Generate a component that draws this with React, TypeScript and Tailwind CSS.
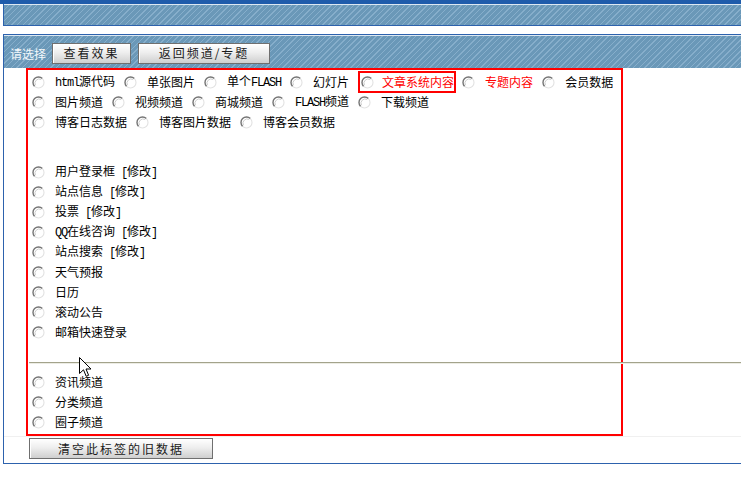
import React from 'react';

type Option = {
    label: React.ReactNode;
    red?: boolean;
    boxed?: boolean;
};

// half-width latin runs, 6px per glyph like the old bitmap font
const M: React.FC<{ children: React.ReactNode }> = ({ children }) => (
    <span className="font-['Liberation_Mono',monospace] text-[12px] tracking-[-1.2px]">{children}</span>
);

const Radio: React.FC = () => (
    <svg width="13" height="13" viewBox="0 0 13 13" className="shrink-0">
        <circle cx="6.5" cy="6.5" r="5.5" fill="#ffffff" />
        <path d="M2.6 10.4 A5.5 5.5 0 0 1 10.4 2.6" fill="none" stroke="#747474" strokeWidth="1.4" />
        <path d="M10.4 2.6 A5.5 5.5 0 0 1 2.6 10.4" fill="none" stroke="#e2e2e2" strokeWidth="1.1" />
        <path d="M3.5 9.2 A4.2 4.2 0 0 1 9.2 3.5" fill="none" stroke="#c0c0c0" strokeWidth="0.8" />
    </svg>
);

const withEdit = (name: React.ReactNode) => (
    <>
        {name}
        <M> [</M>修改<M>]</M>
    </>
);

const typeRows: Option[][] = [
    [
        { label: <><M>html</M>源代码</> },
        { label: '单张图片' },
        { label: <>单个<M>FLASH</M></> },
        { label: '幻灯片' },
        { label: '文章系统内容', red: true, boxed: true },
        { label: '专题内容', red: true },
        { label: '会员数据' },
    ],
    [
        { label: '图片频道' },
        { label: '视频频道' },
        { label: '商城频道' },
        { label: <><M>FLASH</M>频道</> },
        { label: '下载频道' },
    ],
    [
        { label: '博客日志数据' },
        { label: '博客图片数据' },
        { label: '博客会员数据' },
    ],
];

const blockRows: React.ReactNode[] = [
    withEdit('用户登录框'),
    withEdit('站点信息'),
    withEdit('投票'),
    withEdit(<><M>QQ</M>在线咨询</>),
    withEdit('站点搜索'),
    '天气预报',
    '日历',
    '滚动公告',
    '邮箱快速登录',
];

const channelRows = ['资讯频道', '分类频道', '圈子频道'];

const stripes =
    'bg-[repeating-linear-gradient(135deg,#6a98b8_0px,#6a98b8_3px,#86aecb_3px,#86aecb_4px)]';

const OptionItem: React.FC<{ opt: Option }> = ({ opt }) => {
    const text = (
        <span className={`whitespace-nowrap ${opt.red ? 'text-[#ff0000]' : 'text-black'}`}>{opt.label}</span>
    );
    if (opt.boxed) {
        return (
            <span className="shrink-0 flex items-center h-[22px] -my-[1px] border-2 border-[#ff0000] pl-[1px] mr-[6px]">
                <Radio />
                <span className="ml-[8px] flex items-center">{text}</span>
            </span>
        );
    }
    return (
        <span className="shrink-0 flex items-center mr-[9px]">
            <Radio />
            <span className="ml-[10px] flex items-center">{text}</span>
        </span>
    );
};

const LineItem: React.FC<{ children: React.ReactNode }> = ({ children }) => (
    <div className="flex items-center h-[20px]">
        <Radio />
        <span className="ml-[10px] text-black whitespace-nowrap">{children}</span>
    </div>
);

const GrayButton: React.FC<{ width: string; children: React.ReactNode }> = ({ width, children }) => (
    <button
        className={`${width} h-[21px] border border-[#6f6f6f] bg-[linear-gradient(#ffffff,#eeeeee_45%,#cfcfcf)] shadow-[inset_1px_1px_0_#ffffff] text-[12px] leading-none tracking-[2px] text-[#1a1a1a] flex items-center justify-center`}
    >
        {children}
    </button>
);

const App: React.FC = () => {
    return (
        <div className="relative w-[741px] h-[479px] overflow-hidden bg-white font-['Noto_Sans_CJK_SC',sans-serif] text-[12px] leading-[20px]">
            <div className="h-[4px] bg-[#1f5cab]" />
            <div className="ml-[3px] border-l border-b border-[#2d62ad]">
                <div className="h-[1px] bg-[#dce8f2]" />
                <div className={`h-[20px] ${stripes}`} />
            </div>
            <div className="h-[8px]" />

            <div className="ml-[3px] border-l border-t border-b border-[#2d62ad]">
                <div className="h-[1px] bg-[#dce8f2]" />
                <div className={`h-[32px] ${stripes} flex items-center pl-[6px] pt-[2px]`}>
                    <span className="text-[#f4f8fb] mr-[6px] mt-[2px]">请选择</span>
                    <GrayButton width="w-[79px]">查看效果</GrayButton>
                    <span className="w-[7px]" />
                    <GrayButton width="w-[132px]">返回频道/专题</GrayButton>
                </div>

                <div className="ml-[22px] w-[597px] h-[368px] border-2 border-[#ff0000] pl-[4px] pt-[2px]">
                    {typeRows.map((row, i) => (
                        <div key={i} className="flex items-center h-[20px]">
                            {row.map((opt, j) => (
                                <OptionItem key={j} opt={opt} />
                            ))}
                        </div>
                    ))}

                    <div className="mt-[30px]">
                        {blockRows.map((label, i) => (
                            <LineItem key={i}>{label}</LineItem>
                        ))}
                    </div>

                    <div className="mt-[20px] -ml-[3px] w-[712px] h-[1px] bg-[#a3a38b]" />
                    <div className="-ml-[3px] w-[712px] h-[1px] bg-[#ecece4]" />

                    <div className="mt-[8px]">
                        {channelRows.map(label => (
                            <LineItem key={label}>{label}</LineItem>
                        ))}
                    </div>
                </div>

                <div className="h-[1px] bg-[#f0f0f0]" />
                <div className="pl-[25px] pt-[1px] pb-[4px]">
                    <GrayButton width="w-[184px]">清空此标签的旧数据</GrayButton>
                </div>
            </div>

            {/* mouse pointer */}
            <svg
                className="absolute left-[79px] top-[357px]"
                width="13"
                height="21"
                viewBox="0 0 13 21"
            >
                <path
                    d="M0.5 0.5 L0.5 16.5 L4.5 12.8 L7.2 19.3 L9.6 18.3 L7 12 L12 12 Z"
                    fill="#ffffff"
                    stroke="#000000"
                    strokeWidth="1"
                    strokeLinejoin="miter"
                />
            </svg>
        </div>
    );
};

export default App;
